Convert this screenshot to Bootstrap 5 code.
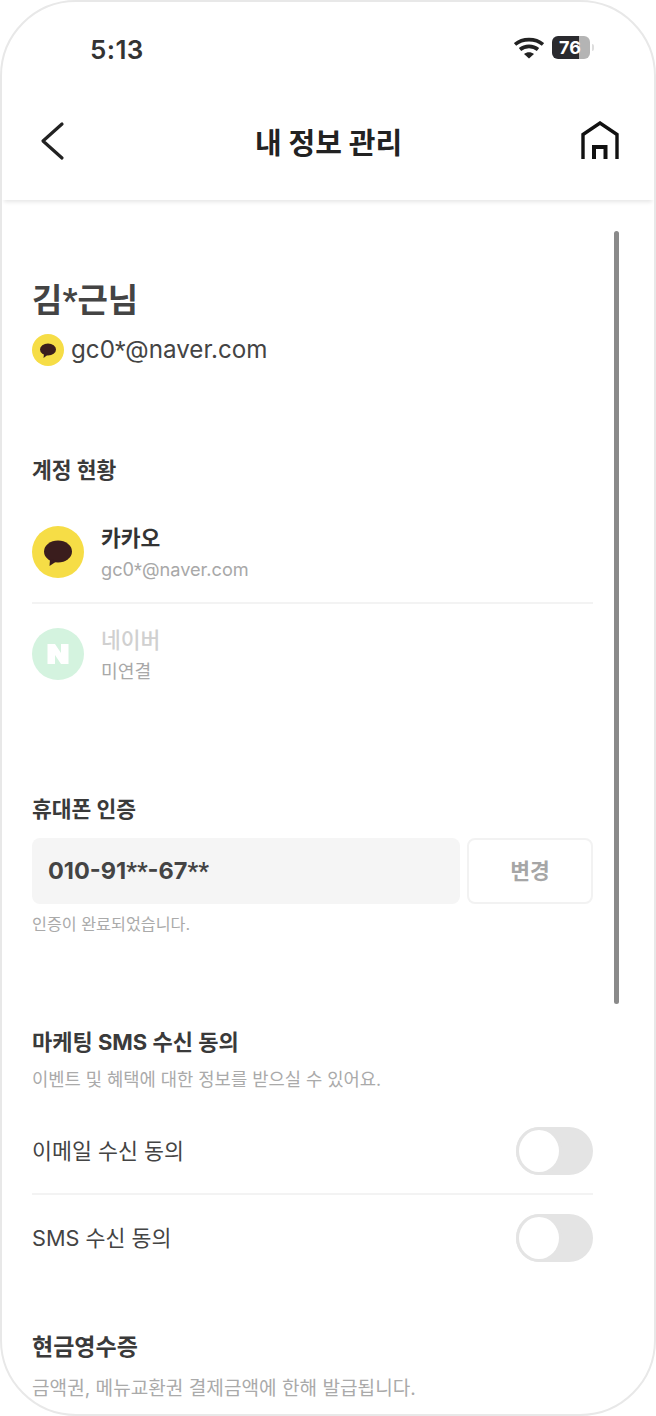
<!DOCTYPE html>
<html lang="ko">
<head>
<meta charset="utf-8">
<title>내 정보 관리</title>
<link href="https://cdn.jsdelivr.net/npm/bootstrap@5.3.0/dist/css/bootstrap.min.css" rel="stylesheet">
<style>
html,body{margin:0;background:#fff;}
body{font-family:Inter,"Noto Sans CJK KR",sans-serif;color:#333;}
.phone{width:656px;height:1416px;border:2px solid #e8e8e8;border-radius:76px;overflow:hidden;position:relative;background:#fff;}
.statusbar{height:96px;padding:30px 64px 0 88px;}
.clock{font-size:26px;font-weight:600;line-height:36px;color:#333;letter-spacing:.4px;}
.batt{width:38px;height:23px;border-radius:6px;background:linear-gradient(90deg,#2a2a2e 0,#2a2a2e 72%,#b4b4b4 72%);color:#fff;font-size:18px;font-weight:700;line-height:23px;padding-left:7px;position:relative;}
.batt::after{content:"";position:absolute;right:-4px;top:8px;width:2px;height:7px;background:#ddd;border-radius:0 2px 2px 0;}
.topnav{height:102px;padding:0 35px 16px 36px;box-shadow:0 4px 4px -2px rgba(0,0,0,.1);position:relative;}
.topnav h1{font-size:29px;font-weight:700;color:#222;margin:6px 0 0;line-height:40px;}
.navside{width:38px;}
.body-wrap{padding:76px 61px 0 30px;}
.uname{font-size:33px;font-weight:700;line-height:48px;color:#444;margin:0;}
.umail{font-size:24.2px;line-height:36px;color:#444;gap:7px;margin-top:7px;}
.star{font-family:Roboto,sans-serif;}
.sect{font-size:21.5px;font-weight:700;line-height:30px;color:#3a3a3a;margin:0;}
.acct{gap:17px;}
.acct .ttl{font-size:21.5px;font-weight:700;line-height:30px;color:#333;margin-top:1px;}
.acct .sub{font-size:18.2px;line-height:26px;color:#a8a8a8;margin-top:3px;}
.rule{height:2px;background:#f3f3f3;margin:0;}
.faded .ttl{color:#d0d0d0;font-weight:500;}
.numbox{flex:1;height:66px;background:#f5f5f5;border-radius:8px;font-size:23.5px;font-weight:700;color:#444;padding-left:16px;line-height:66px;}
.chgbtn{width:126px;height:66px;border:2px solid #f2f2f2;border-radius:8px;background:#fff;color:#a6a6a6;font-size:21.5px;font-weight:700;padding:0;}
.note{font-size:16.2px;line-height:24px;color:#aaa;margin-top:8px;}
.note2{font-size:17.7px;line-height:26px;color:#aaa;}
.rowline{height:85px;font-size:21.7px;color:#444;}
.rowtxt{padding-top:2px;}
.tgl{width:77px;height:48px;border-radius:24px;background:#e4e4e4;position:relative;}
.tgl::before{content:"";position:absolute;left:0;top:0;width:46px;height:48px;border-radius:50%;background:#fff;border:3px solid #e4e4e4;}
.scrollthumb{position:absolute;left:612px;top:229px;width:5px;height:773px;background:#8a8a8a;border-radius:3px;}
</style>
</head>
<body>
<div class="phone">
  <div class="statusbar d-flex justify-content-between align-items-start">
    <div class="clock">5:13</div>
    <div class="d-flex align-items-center gap-2 pt-1">
      <svg width="30" height="22" viewBox="0 0 30 22" aria-hidden="true"><path d="M1 7.5C8.500 1 21.500 1 29 7.500" fill="none" stroke="#222" stroke-width="3.600"/><path d="M6 12.500C11 8.300 19 8.300 24 12.500" fill="none" stroke="#222" stroke-width="3.600"/><path d="M10 17 15 21.500 20 17C17 14.500 13 14.500 10 17Z" fill="#222"/></svg>
      <div class="batt">76</div>
    </div>
  </div>
  <div class="topnav d-flex align-items-center justify-content-between">
    <div class="navside"><svg class="d-block" width="30" height="40" viewBox="0 0 30 40" aria-hidden="true"><path d="M24 3 5 20 24 37" fill="none" stroke="#222" stroke-width="3.200" stroke-linecap="round" stroke-linejoin="round"/></svg></div>
    <h1>내 정보 관리</h1>
    <svg width="38" height="40" viewBox="0 0 38 40" aria-hidden="true"><path d="M2 38V13.500L19 2 36 13.500V38" fill="none" stroke="#111" stroke-width="3.400"/><path d="M13 38V26H24.500V38" fill="none" stroke="#111" stroke-width="4"/></svg>
  </div>
  <div class="body-wrap">
    <h2 class="uname">김<span class="star">*</span>근님</h2>
    <div class="umail d-flex align-items-center">
      <svg width="32" height="32" viewBox="0 0 32 32" aria-hidden="true"><circle cx="16" cy="16" r="16" fill="#f6dd46"/><ellipse cx="16" cy="15.500" rx="8" ry="6" fill="#3a1d1d"/><path d="M12 19.500 11.500 24 16 20.500Z" fill="#3a1d1d"/></svg>
      <span>gc0<span class="star">*</span>@naver.com</span>
    </div>
    <h3 class="sect" style="margin-top:87px">계정 현황</h3>
    <div class="acct d-flex align-items-center" style="margin-top:41px;height:52px">
      <svg width="52" height="52" viewBox="0 0 52 52" aria-hidden="true"><circle cx="26" cy="26" r="26" fill="#f6dd46"/><ellipse cx="26" cy="25.500" rx="14" ry="11" fill="#3a1d1d"/><path d="M18 33 17.500 40 25 35Z" fill="#3a1d1d"/></svg>
      <div>
        <div class="ttl">카카오</div>
        <div class="sub">gc0<span class="star">*</span>@naver.com</div>
      </div>
    </div>
    <div class="rule" style="margin-top:24px"></div>
    <div class="acct faded d-flex align-items-center" style="margin-top:24px;height:52px">
      <svg width="52" height="52" viewBox="0 0 52 52" aria-hidden="true"><circle cx="26" cy="26" r="26" fill="#d4f3df"/><path d="M15.500 16H23L29 25V16H36.500V36H29L23 27V36H15.500Z" fill="#fff"/></svg>
      <div>
        <div class="ttl">네이버</div>
        <div class="sub">미연결</div>
      </div>
    </div>
    <h3 class="sect" style="margin-top:114px">휴대폰 인증</h3>
    <div class="d-flex" style="margin-top:14px;gap:7px">
      <div class="numbox">010-91<span class="star">**</span>-67<span class="star">**</span></div>
      <button class="chgbtn btn" type="button">변경</button>
    </div>
    <div class="note">인증이 완료되었습니다.</div>
    <h3 class="sect" style="margin-top:91px;font-size:22px">마케팅 SMS 수신 동의</h3>
    <div class="note2" style="margin-top:10px">이벤트 및 혜택에 대한 정보를 받으실 수 있어요.</div>
    <div class="rowline d-flex align-items-center justify-content-between" style="margin-top:15px">
      <span class="rowtxt">이메일 수신 동의</span><span class="tgl"></span>
    </div>
    <div class="rule"></div>
    <div class="rowline d-flex align-items-center justify-content-between">
      <span class="rowtxt">SMS 수신 동의</span><span class="tgl"></span>
    </div>
    <h3 class="sect" style="margin-top:52px;font-size:23px">현금영수증</h3>
    <div class="note2" style="margin-top:13px;font-size:19.1px">금액권, 메뉴교환권 결제금액에 한해 발급됩니다.</div>
  </div>
  <div class="scrollthumb"></div>
</div>
<script src="https://cdn.jsdelivr.net/npm/bootstrap@5.3.0/dist/js/bootstrap.bundle.min.js"></script>
</body>
</html>
